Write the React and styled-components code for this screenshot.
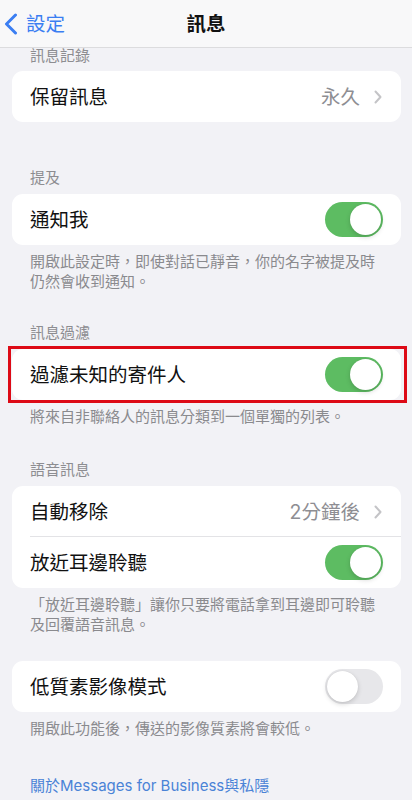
import React from "react";
import styled, { createGlobalStyle } from "styled-components";

const GlobalStyle = createGlobalStyle`
  html, body {
    margin: 0;
    padding: 0;
    background: #f2f2f6;
  }
  body {
    font-family: Inter, "Noto Sans CJK TC", "Noto Sans", sans-serif;
    -webkit-font-smoothing: antialiased;
  }
`;

const Page = styled.div`
  width: 412px;
  min-height: 800px;
  background: #f2f2f6;
  overflow: hidden;
`;

const NavBar = styled.div`
  height: 47px;
  border-bottom: 1px solid #dcdcde;
  background: #f8f8f9;
  display: grid;
  grid-template-columns: 1fr auto 1fr;
  align-items: center;
`;

const BackButton = styled.div`
  display: flex;
  align-items: center;
  gap: 8px;
  padding-left: 4px;
  color: #3b7ef2;
  font-size: 19.5px;
  line-height: 24px;
`;

const Title = styled.div`
  font-size: 19.5px;
  font-weight: 700;
  color: #111;
  line-height: 24px;
`;

const Section = styled.div`
  margin-top: ${(p) => p.$gap || 0}px;
`;

const Header = styled.div`
  padding: 0 18px 0 30px;
  font-size: 15px;
  color: #8d8d91;
  line-height: ${(p) => (p.$compact ? 16 : 20)}px;
  margin-bottom: ${(p) => (p.$compact ? 7 : 6)}px;
`;

const Card = styled.div`
  position: relative;
  margin: 0 11px 0 12px;
  background: #fff;
  border-radius: 11px;
`;

const Highlight = styled.div`
  position: absolute;
  left: -4px;
  right: -6px;
  top: -3px;
  bottom: -3px;
  border: 3px solid #dd0a16;
  pointer-events: none;
`;

const Row = styled.div`
  height: 51px;
  display: flex;
  align-items: center;
  justify-content: space-between;
  padding: 0 18px;
  position: relative;
  ${(p) =>
    p.$divider &&
    `
    &::after {
      content: "";
      position: absolute;
      left: 18px;
      right: 0;
      bottom: 0;
      height: 1px;
      background: #e3e3e6;
    }
  `}
`;

const Label = styled.div`
  font-size: 19.5px;
  color: #111;
  line-height: 26px;
`;

const Value = styled.div`
  display: flex;
  align-items: center;
  gap: 14px;
  font-size: 19.5px;
  color: #8e8e93;
  line-height: 26px;
  padding-right: 1px;
`;

const Footer = styled.div`
  padding: 7px 20px 0 30px;
  font-size: 15px;
  line-height: 20px;
  color: #8a8a8e;
`;

const Link = styled.div`
  margin-top: 37px;
  padding: 0 30px;
  font-size: 15px;
  line-height: 20px;
  color: #4a83d6;
`;

const Track = styled.div`
  width: 58px;
  height: 35px;
  border-radius: 18px;
  background: ${(p) => (p.$on ? "#5dbc62" : "#e7e7ea")};
  display: flex;
  align-items: center;
  justify-content: ${(p) => (p.$on ? "flex-end" : "flex-start")};
  padding: 2px;
  box-sizing: border-box;
`;

const Knob = styled.div`
  width: 31px;
  height: 31px;
  border-radius: 50%;
  background: #fff;
  box-shadow: 0 2px 5px rgba(0, 0, 0, 0.16), 0 0 1px rgba(0, 0, 0, 0.12);
`;

const Toggle = ({ on }) => (
  <Track $on={on}>
    <Knob />
  </Track>
);

const Chevron = () => (
  <svg width="8" height="14" viewBox="0 0 8 14">
    <path
      d="M1.5 1.5 L6.5 7 L1.5 12.5"
      fill="none"
      stroke="#c4c4c7"
      strokeWidth="2"
      strokeLinecap="round"
      strokeLinejoin="round"
    />
  </svg>
);

const BackIcon = () => (
  <svg width="14" height="22" viewBox="0 0 14 22">
    <path
      d="M11.5 2 L2.5 11 L11.5 20"
      fill="none"
      stroke="#3b7ef2"
      strokeWidth="3"
      strokeLinecap="round"
      strokeLinejoin="round"
    />
  </svg>
);

export default function App() {
  return (
    <Page>
      <GlobalStyle />
      <NavBar>
        <BackButton>
          <BackIcon />
          <span>設定</span>
        </BackButton>
        <Title>訊息</Title>
        <div />
      </NavBar>

      <Section>
        <Header $compact>訊息記錄</Header>
        <Card>
          <Row>
            <Label>保留訊息</Label>
            <Value>
              永久
              <Chevron />
            </Value>
          </Row>
        </Card>
      </Section>

      <Section $gap={46}>
        <Header>提及</Header>
        <Card>
          <Row>
            <Label>通知我</Label>
            <Toggle on />
          </Row>
        </Card>
        <Footer>
          開啟此設定時，即使對話已靜音，你的名字被提及時
          <br />
          仍然會收到通知。
        </Footer>
      </Section>

      <Section $gap={31}>
        <Header>訊息過濾</Header>
        <Card>
          <Row>
            <Label>過濾未知的寄件人</Label>
            <Toggle on />
          </Row>
          <Highlight />
        </Card>
        <Footer>將來自非聯絡人的訊息分類到一個單獨的列表。</Footer>
      </Section>

      <Section $gap={33}>
        <Header>語音訊息</Header>
        <Card>
          <Row $divider>
            <Label>自動移除</Label>
            <Value>
              2分鐘後
              <Chevron />
            </Value>
          </Row>
          <Row>
            <Label>放近耳邊聆聽</Label>
            <Toggle on />
          </Row>
        </Card>
        <Footer>
          「放近耳邊聆聽」讓你只要將電話拿到耳邊即可聆聽
          <br />
          及回覆語音訊息。
        </Footer>
      </Section>

      <Section $gap={26}>
        <Card>
          <Row>
            <Label>低質素影像模式</Label>
            <Toggle />
          </Row>
        </Card>
        <Footer>開啟此功能後，傳送的影像質素將會較低。</Footer>
      </Section>

      <Link>關於Messages for Business與私隱</Link>
    </Page>
  );
}
